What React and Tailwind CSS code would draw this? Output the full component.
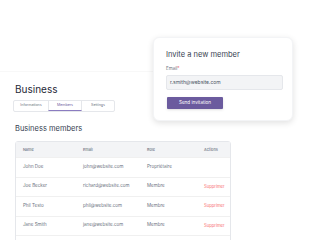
import React from 'react';

const members = [
    { name: 'John Doe', email: 'john@website.com', role: 'Propriétaire', owner: true },
    { name: 'Joe Becker', email: 'richard@website.com', role: 'Membre' },
    { name: 'Phil Testo', email: 'phil@website.com', role: 'Membre' },
    { name: 'Jane Smith', email: 'jane@website.com', role: 'Membre' },
];

const App = () => {
    return (
        <div className="relative w-[320px] h-[240px] overflow-hidden bg-white font-['Inter',sans-serif] text-[#374151]">
            {/* top area */}
            <div className="h-[72px] w-[160px] border-b border-[#f8f8f8]" />

            <div className="pl-[15px] pt-[11px]">
                <h1 className="text-[10px] leading-[12px] text-[#1f2937]">Business</h1>

                {/* tabs */}
                <div className="mt-[5px] -ml-[2px] flex w-[102px] h-[12px] border border-[#e5e7eb] rounded-[2px] text-[3.6px] text-[#6b7280]">
                    <div className="w-[34px] flex items-center justify-center">Informations</div>
                    <div className="w-[34px] flex items-center justify-center border-x border-[#e5e7eb] border-b border-b-[#8b7cc0] text-[#6b5b9e]">Members</div>
                    <div className="flex-1 flex items-center justify-center">Settings</div>
                </div>

                <h2 className="mt-[12px] text-[7.5px] leading-[10px] text-[#374151]">Business members</h2>

                {/* table */}
                <div className="mt-[7px] w-[216px] border border-[#e5e7eb] rounded-t-[3px] text-[4.5px]">
                    <div className="grid grid-cols-[60px_64px_57px_1fr] h-[15px] items-center pl-[7px] bg-[#f3f4f6] text-[#6b7280] font-medium text-[3.8px]">
                        <div>Name</div>
                        <div>Email</div>
                        <div>Role</div>
                        <div>Actions</div>
                    </div>
                    {members.map((m) => (
                        <div key={m.email} className="grid grid-cols-[60px_64px_57px_1fr] h-[19.5px] items-center pl-[7px] border-t border-[#f0f0f0] text-[#6b7280]">
                            <div>{m.name}</div>
                            <div>{m.email}</div>
                            <div>{m.role}</div>
                            <div className="text-[#f87171] text-[4.2px]">{m.owner ? '' : 'Supprimer'}</div>
                        </div>
                    ))}
                    <div className="h-[19.5px] border-t border-[#f0f0f0]" />
                </div>
            </div>

            {/* invite popover */}
            <div className="absolute left-[153px] top-[37px] w-[140px] h-[84px] bg-white rounded-[6px] border border-[#f3f4f6] shadow-[0_2px_6px_rgba(0,0,0,0.12)] px-[12px] pt-[12px]">
                <div className="text-[7.5px] leading-[10px] text-[#374151]">Invite a new member</div>
                <div className="mt-[6px] text-[4.5px] leading-[6px] text-[#6b7280]">
                    Email<span className="text-[#ef4444]">*</span>
                </div>
                <div className="mt-[3px] h-[15px] w-[117px] bg-[#f3f4f6] border border-[#e5e7eb] rounded-[2px] flex items-center pl-[3px] text-[5px] text-[#4b5563]">
                    r.smith@website.com
                </div>
                <button className="mt-[7px] ml-[1px] w-[56px] h-[12px] bg-[#6b5b9e] rounded-[1px] text-white text-[4.6px] flex items-center justify-center shadow-sm">
                    Send invitation
                </button>
            </div>
        </div>
    );
};

export default App;
